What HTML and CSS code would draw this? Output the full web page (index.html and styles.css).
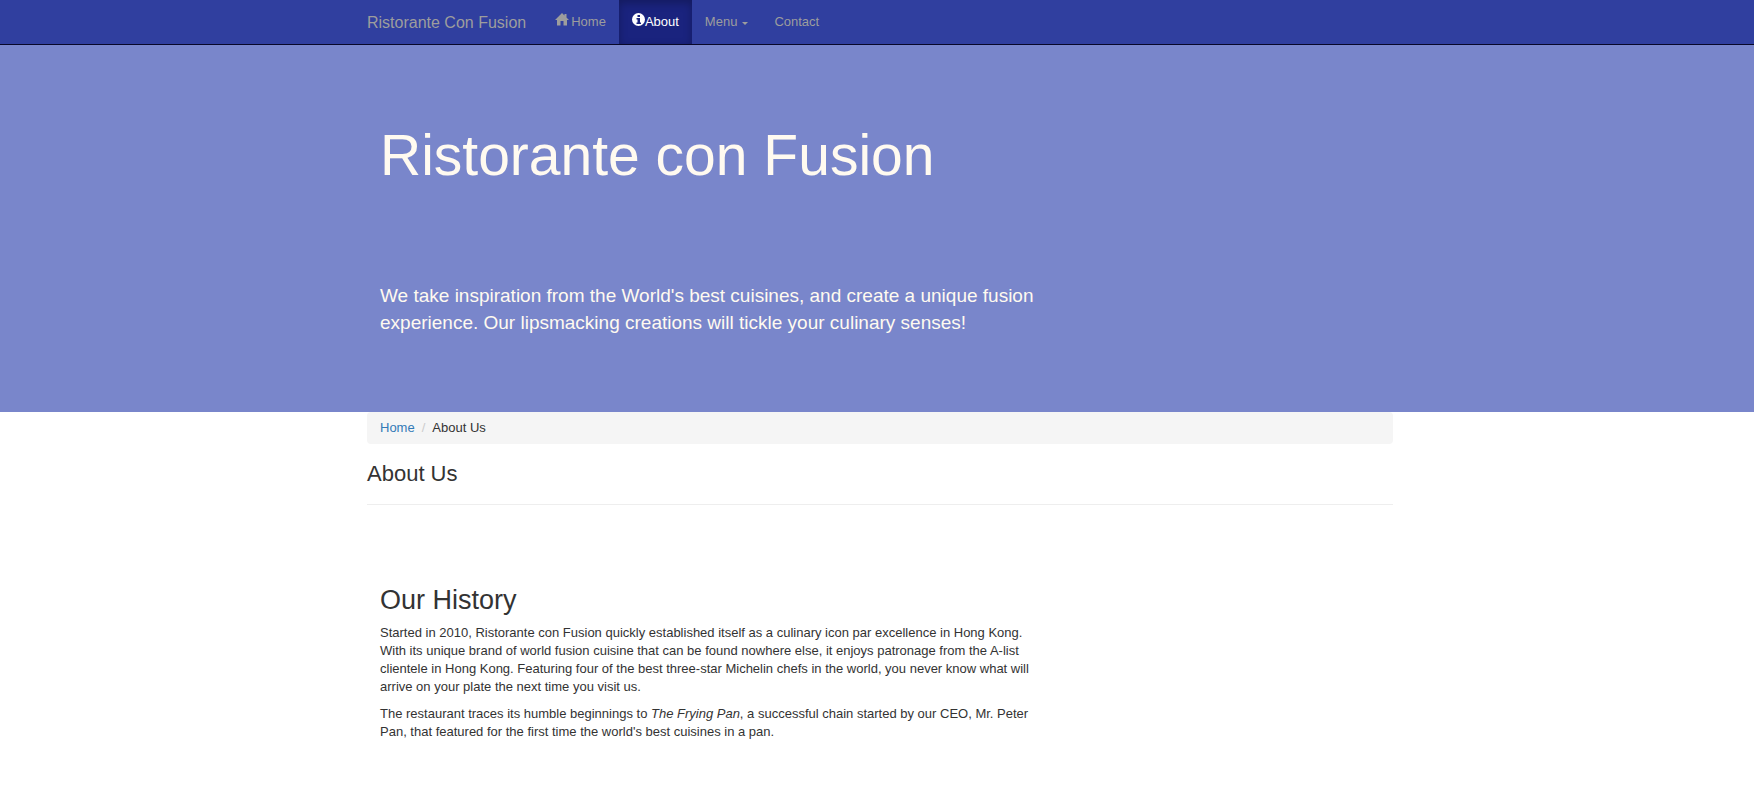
FILE: index.html
```html
<!DOCTYPE html>
<html lang="en">
<head>
<meta charset="utf-8">
<meta name="viewport" content="width=device-width, initial-scale=1">
<title>Ristorante Con Fusion: About Us</title>
<link rel="stylesheet" href="styles.css">
</head>
<body>
<nav class="navbar" aria-label="Main">
  <div class="container navbar-inner">
    <a class="brand" href="#">Ristorante Con Fusion</a>
    <ul class="nav-list">
      <li><a class="nav-link" href="#"><svg class="icon icon-home" viewBox="0 0 14 13" aria-hidden="true"><path d="M7 0 0 7h2v5.500h3.500V8h3v4.500H12V7h2l-2.500-2.500V1h-2v1.500z"/></svg>Home</a></li>
      <li><a class="nav-link active" href="#" aria-current="page"><svg class="icon" viewBox="0 0 13 13" aria-hidden="true"><path fill-rule="evenodd" d="M6.500 0a6.500 6.500 0 1 0 0 13a6.500 6.500 0 0 0 0-13zM5.500 2h2.500v2H5.500zM4.500 5H8v4.500h1V11H4.500V9.500h1v-3h-1z"/></svg>About</a></li>
      <li><a class="nav-link" href="#" aria-haspopup="true">Menu<span class="caret"></span></a></li>
      <li><a class="nav-link" href="#">Contact</a></li>
    </ul>
  </div>
</nav>
<header class="hero">
  <div class="container">
    <div class="column">
      <h1 class="hero-title">Ristorante con Fusion</h1>
      <p class="lead">We take inspiration from the World's best cuisines, and create a unique fusion experience. Our lipsmacking creations will tickle your culinary senses!</p>
    </div>
  </div>
</header>
<main class="main">
  <div class="container">
    <ol class="breadcrumb">
      <li><a class="crumb-link" href="#">Home</a></li>
      <li>About Us</li>
    </ol>
    <h3 class="page-title">About Us</h3>
    <hr class="rule">
    <section class="column history">
      <h2 class="section-title">Our History</h2>
      <p class="text">Started in 2010, Ristorante con Fusion quickly established itself as a culinary icon par excellence in Hong Kong. With its unique brand of world fusion cuisine that can be found nowhere else, it enjoys patronage from the A-list clientele in Hong Kong. Featuring four of the best three-star Michelin chefs in the world, you never know what will arrive on your plate the next time you visit us.</p>
      <p class="text">The restaurant traces its humble beginnings to <em>The Frying Pan</em>, a successful chain started by our CEO, Mr. Peter Pan, that featured for the first time the world's best cuisines in a pan.</p>
    </section>
  </div>
</main>
</body>
</html>
```

FILE: styles.css
```css
* { box-sizing: border-box; }

body {
  margin: 0;
  background: #fff;
  color: #333;
  font-family: "Liberation Sans", Arial, sans-serif;
  font-size: 13px;
  line-height: 18px;
}

.navbar, .hero, .main { padding-left: 6px; }

.container {
  max-width: 1054px;
  margin: 0 auto;
  padding: 0 14px;
}

.column { max-width: 686px; padding: 0 13px; }

.navbar { background: #303f9f; border-bottom: 1px solid #080829; }
.navbar-inner { display: flex; flex-wrap: wrap; }

.brand {
  padding: 14px 16px 12px 0;
  color: #9d9d9d;
  font-size: 16px;
  text-decoration: none;
}

.nav-list { display: flex; flex-wrap: wrap; margin: 0; padding: 0; list-style: none; }

.nav-link {
  display: flex;
  align-items: center;
  padding: 13px;
  color: #9d9d9d;
  text-decoration: none;
}

.nav-link.active {
  background: #1a237e;
  box-shadow: inset 0 3px 8px rgba(0, 0, 0, 0.25);
  color: #fff;
}

.icon { width: 13px; height: 13px; margin-bottom: 5px; fill: currentColor; }
.icon-home { width: 14px; margin-right: 2px; }

.caret {
  margin: 2px 0 0 5px;
  border: 3px solid transparent;
  border-top-color: currentColor;
  border-bottom: 0;
}

.hero { padding-top: 79px; padding-bottom: 76px; background: #7986cb; color: #fffaf0; }

.hero-title { margin: 0 0 96px; font-size: 57px; font-weight: 400; line-height: 62px; }

.lead { margin: 0; font-size: 19px; line-height: 27px; }

.breadcrumb {
  display: flex;
  margin: 0;
  padding: 7px 13px;
  border-radius: 4px;
  background: #f5f5f5;
  list-style: none;
}

.breadcrumb li + li::before { content: "/"; padding: 0 7px; color: #ccc; }
.crumb-link { color: #337ab7; text-decoration: none; }

.page-title { margin: 18px 0; font-size: 22px; font-weight: 400; line-height: 24px; }

.rule { margin: 0; border: 0; border-top: 1px solid #eee; }

.history { padding-top: 80px; padding-bottom: 45px; }

.section-title { margin: 0 0 9px; font-size: 27px; font-weight: 400; line-height: 30px; }

.text { margin: 0 0 9px; }
```
